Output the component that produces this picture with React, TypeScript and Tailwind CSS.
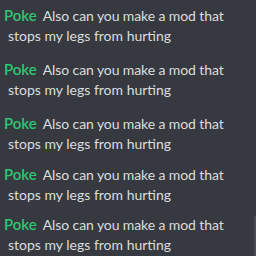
const gaps = ['mt-[5px]', 'mt-[13px]', 'mt-[13px]', 'mt-[10px]', 'mt-[9px]']

function Message({ gap }: { gap: string }) {
  return (
    <div className={`${gap} pl-[4px] text-[14px] leading-[20px] text-[#dcddde]`}>
      <div className="whitespace-nowrap tracking-[-0.1px]">
        <span className="mr-[3px] text-[15px] font-semibold tracking-normal text-[#2dc770]">Poke</span> Also can you make a mod that
      </div>
      <div className="pl-[4px] whitespace-nowrap">stops my legs from hurting</div>
    </div>
  )
}

export default function App() {
  return (
    <div
      className="relative w-[256px] h-[256px] overflow-hidden bg-[#36393f] flex flex-col"
      style={{ fontFamily: 'Lato, "Noto Sans", sans-serif' }}
    >
      {gaps.map((g, i) => (
        <Message key={i} gap={g} />
      ))}
      {/* scrollbar thumb */}
      <div className="absolute right-0 top-[216px] bottom-0 w-[2px] bg-[#4a4d55]" />
    </div>
  )
}
